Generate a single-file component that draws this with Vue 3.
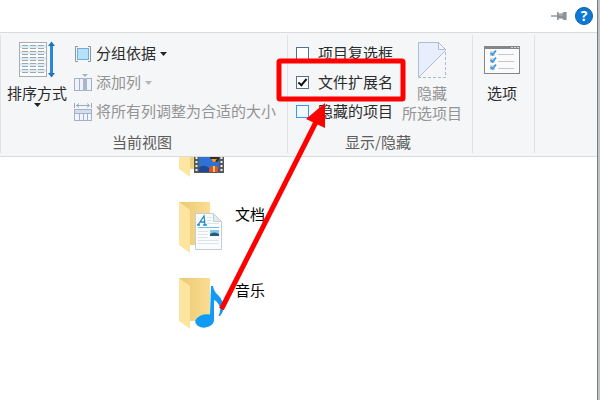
<script setup>
import { ref } from 'vue';

const itemCheckBoxes = ref(false);
const fileExtensions = ref(true);
const hiddenItems = ref(false);

const sheetRows = [4, 7, 10, 13, 16, 19, 22, 25, 28, 31];
</script>

<template>
  <div class="window">
    <header class="title-bar">
      <button class="icon-button" aria-label="固定功能区">
        <svg width="16" height="10" viewBox="0 0 16 10">
          <path d="M0 5h7" stroke="#8b9298" stroke-width="1.4" />
          <path d="M6 1h1.6v1.500h4V1.500l2-.5h2v8h-2l-2-.5v-1h-4V9H6z" fill="#8b9298" />
          <path d="M8 4h4" stroke="#b9bec3" />
        </svg>
      </button>
      <button class="help" aria-label="帮助">?</button>
    </header>

    <section class="ribbon">
      <div class="group">
        <div class="group-body view-body">
          <button class="large-button">
            <span class="large-icon">
              <svg width="38" height="38" viewBox="0 0 38 38">
                <rect x="1.500" y="1.500" width="27" height="34" fill="#fbfcfc" stroke="#a9adb0" />
                <path d="M2 4h26v3H2zM2 10h26v3H2zM2 16h26v3H2zM2 22h26v3H2zM2 28h26v3H2z" fill="#d8edf6" />
                <path
                  v-for="y in sheetRows"
                  :key="y"
                  :d="`M4 ${y + 0.5}h6M12 ${y + 0.5}h6M20 ${y + 0.5}h6`"
                  stroke="#a5a5a5"
                />
                <path d="M33.500 3v31" stroke="#2b86d3" stroke-width="3" />
                <path d="M30 5l3.500-4.500L37 5zM30 32l3.500 4.500L37 32z" fill="#1f74bf" />
              </svg>
            </span>
            <span>排序方式</span>
            <svg width="7" height="4" viewBox="0 0 7 4"><path d="M0 0h7L3.500 4z" fill="#222" /></svg>
          </button>
          <div class="commands">
            <button class="command">
              <svg width="18" height="18" viewBox="0 0 18 18">
                <path d="M4 1.500H1.500v15H4M14 1.500h2.500v15H14" fill="none" stroke="#8e9499" />
                <rect x="3.500" y="3.500" width="11" height="11" fill="#b9e0fb" stroke="#6aaee0" />
              </svg>
              <span>分组依据</span>
              <svg width="7" height="4" viewBox="0 0 7 4"><path d="M0 0h7L3.500 4z" fill="#222" /></svg>
            </button>
            <button class="command" disabled>
              <svg width="18" height="18" viewBox="0 0 18 18">
                <path d="M8 0h6l-3 3z" fill="#a3b2c9" />
                <rect x=".5" y="4.500" width="17" height="12" fill="#eef3fb" stroke="#a3b2c9" />
                <path d="M9 4h4v13H9z" fill="#a9b6cb" />
                <path d="M5.500 5v11" stroke="#a3b2c9" />
              </svg>
              <span>添加列</span>
              <svg width="7" height="4" viewBox="0 0 7 4"><path d="M0 0h7L3.500 4z" fill="#b4b6b8" /></svg>
            </button>
            <button class="command" disabled>
              <svg width="18" height="18" viewBox="0 0 18 18">
                <path d="M.5 0v5M17.500 0v5M2 2.500h14M5 .5l-2.500 2L5 4.500M13 .5l2.500 2-2.500 2" fill="none" stroke="#98a8c2" />
                <rect x=".5" y="6.500" width="17" height="11" fill="#f2f5fb" stroke="#a3b2c9" />
                <path d="M1 7h16v3H1z" fill="#d3dded" />
                <path d="M1 10.500h16M5.500 10v7M9.500 10v7M13.500 10v7" stroke="#a3b2c9" />
              </svg>
              <span>将所有列调整为合适的大小</span>
            </button>
          </div>
        </div>
        <div class="group-title">当前视图</div>
      </div>

      <div class="group">
        <div class="group-body show-body">
          <div class="checks">
            <label class="check"><input v-model="itemCheckBoxes" type="checkbox" /><span>项目复选框</span></label>
            <label class="check"><input v-model="fileExtensions" type="checkbox" /><span>文件扩展名</span></label>
            <label class="check hot"><input v-model="hiddenItems" type="checkbox" /><span>隐藏的项目</span></label>
          </div>
          <button class="large-button" disabled>
            <span class="large-icon">
              <svg width="30" height="38" viewBox="0 0 30 38">
                <path d="M1.500 36.500v-35h20l7 7v1z" fill="#e6effb" />
                <path d="M1.500 36.500v-35h20l7 7v1z" fill="none" stroke="#aebcd6" />
                <path d="M21.500 1.500v7h7z" fill="#f2f6fc" stroke="#aebcd6" />
                <path d="M28.500 11v25.500H2" fill="none" stroke="#a9b7d0" stroke-dasharray="3 2" />
              </svg>
            </span>
            <span>隐藏</span>
            <span>所选项目</span>
          </button>
        </div>
        <div class="group-title">显示/隐藏</div>
      </div>

      <div class="group">
        <div class="group-body option-body">
          <button class="large-button">
            <span class="large-icon">
              <svg width="36" height="28" viewBox="0 0 36 28">
                <rect x=".5" y=".5" width="35" height="27" fill="#fbfbfb" stroke="#83878a" />
                <path d="M0 0h36v3H0z" fill="#83878a" />
                <path d="M27 1.500h2M30 1.500h2M33 1.500h2" stroke="#d5d7d8" />
                <path d="M6 5h5v5H6zM6 12h5v5H6zM6 19h5v5H6z" fill="#d3d8db" />
                <path d="M6.500 7l2 2 3.500-4.500M6.500 14l2 2 3.500-4.500M6.500 21l2 2 3.500-4.500" fill="none" stroke="#3d9ae2" stroke-width="1.800" />
                <path d="M14 8.500h16M14 15.500h16M14 22.500h16" stroke="#c6c8ca" />
              </svg>
            </span>
            <span>选项</span>
          </button>
        </div>
      </div>
    </section>

    <main class="content">
      <ul class="files">
        <li>
          <svg width="48" height="54" viewBox="0 0 48 54">
            <path d="M1 1h31v43H12z" fill="#f1d27c" />
            <path d="M1 1l11 7v44L1 44z" fill="#fde6a0" />
            <path d="M16 10h30v38H16z" fill="#55595b" />
            <path d="M21 10h20v37H21z" fill="#2f72d6" />
            <path d="M21 42q6-3 10 1t10 0v4H21z" fill="#1d4a94" />
            <path d="M18.500 12v35M43.500 12v35" stroke="#eee" stroke-width="2" stroke-dasharray="2 2" />
            <path d="M32 29h9v6l-2 2h-4l-3-4z" fill="#302a34" />
            <path d="M33 34h6l-2 3h-2z" fill="#ef9b26" />
            <path d="M31 47q-1-6 5-6t4 6z" fill="#e4502b" />
            <path d="M35 41h2v6h-2z" fill="#f8d13c" />
          </svg>
        </li>
        <li>
          <svg width="48" height="54" viewBox="0 0 48 54">
            <defs>
              <linearGradient id="docBack" x2="1"><stop stop-color="#ebc974" /><stop offset="1" stop-color="#f9dd91" /></linearGradient>
            </defs>
            <path d="M1 1h31v43H12z" fill="url(#docBack)" />
            <path d="M1 1l11 8v43L1 44z" fill="#fde5a0" />
            <path d="M17.500 12.500h18l8 8v28h-26z" fill="#fafcfd" stroke="#c6cdd1" />
            <path d="M35.500 12.500v8h8z" fill="#e5eaee" stroke="#c6cdd1" />
            <path d="M29 16.500h5M29 19.500h5M29 22.500h12M20 30.500h10M20 33.500h10M20 36.500h10M20 39.500h21M20 42.500h21" stroke="#dbe4e9" />
            <path d="M20 26.500h21" stroke="#78bce5" />
            <path d="M20 24l6-9 1 9M22 21h5M19 24h3M25 24h4" fill="none" stroke="#2489cb" stroke-width="1.300" />
            <path d="M32 29h9v6h-9z" fill="#83c8ef" />
            <path d="M32 33q4-3 9 0v2h-9z" fill="#275d78" />
          </svg>
          <span>文档</span>
        </li>
        <li>
          <svg width="48" height="54" viewBox="0 0 48 54">
            <path d="M1 1h31v43H12z" fill="url(#docBack)" />
            <path d="M1 1l11 8v43L1 44z" fill="#fde5a0" />
            <path
              d="M33 9h2q1 6 5 9 5 5 5.500 12 0 5-3.500 9h-1.500q3-6 .5-11-2-4-5-5v20q0 4-5 6.500-6 2.500-11-.5-5-4-1-8 5-5 13-3.500z"
              fill="#119bf5"
            />
          </svg>
          <span>音乐</span>
        </li>
      </ul>
    </main>

    <svg class="annotation" width="420" height="320" viewBox="0 0 420 320">
      <rect x="279" y="61" width="124" height="38" rx="1" fill="none" stroke="#f00" stroke-width="5" />
      <path d="M221.500 309L316 122" stroke="#f00" stroke-width="5" />
      <path d="M325 103l-19 16 19 9z" fill="#f00" />
    </svg>
  </div>
</template>

<style>
body {
  margin: 0;
  background: #c0c4c5;
}
</style>

<style scoped>
.window {
  position: relative;
  display: flex;
  flex-direction: column;
  box-sizing: border-box;
  min-height: 100vh;
  margin-right: 2px;
  border-right: 1px solid #777c7e;
  background: #fff;
  color: #2b2b2b;
  font-family: "Noto Sans CJK SC", sans-serif;
  font-size: 15px;
  line-height: 20px;
}

button {
  padding: 0;
  border: 0;
  background: none;
  color: inherit;
  font: inherit;
}

button:disabled {
  color: #939393;
}

svg {
  display: block;
  flex: none;
}

.title-bar {
  display: flex;
  align-items: center;
  justify-content: flex-end;
  gap: 8px;
  height: 32px;
  padding-right: 4px;
}

.help {
  width: 18px;
  height: 18px;
  border: 1px solid #0b5fae;
  border-radius: 50%;
  background: #0e78d7;
  color: #fff;
  font-family: "Open Sans", sans-serif;
  font-size: 14px;
  font-weight: 700;
  line-height: 16px;
}

.ribbon {
  display: flex;
  padding: 2px 0 3px;
  border-top: 1px solid #d9dbde;
  border-bottom: 1px solid #d9dbde;
  background: #f5f6f8;
}

.group {
  display: flex;
  flex-direction: column;
  border-right: 1px solid #e0e2e4;
}

.group:first-child {
  border-left: 1px solid #e0e2e4;
}

.group-body {
  display: flex;
  height: 87px;
  padding-top: 4px;
}

.view-body {
  gap: 7px;
  padding-left: 6px;
  padding-right: 11px;
}

.show-body {
  gap: 9px;
  padding-left: 8px;
  padding-right: 10px;
}

.option-body {
  padding-left: 11px;
  padding-right: 14px;
}

.group-title {
  margin: 6px 4px 1px 0;
  color: #5c5c5c;
  text-align: center;
}

.large-button {
  display: flex;
  flex-direction: column;
  align-items: center;
}

.large-icon {
  display: flex;
  align-items: center;
  height: 42px;
  margin-bottom: 2px;
}

.command {
  display: flex;
  align-items: center;
  gap: 4px;
  height: 29px;
}

.check {
  display: flex;
  align-items: center;
  gap: 9px;
  height: 29px;
}

.command span,
.check span {
  padding-bottom: 2px;
}

.check input {
  display: grid;
  place-items: center;
  box-sizing: border-box;
  width: 13px;
  height: 13px;
  margin: 0;
  border: 1px solid #56708f;
  background: #fff;
  appearance: none;
}

.check.hot input {
  border-color: #3399ff;
  background: #f3f9ff;
}

.check input:checked::after {
  content: "";
  width: 3px;
  height: 7px;
  margin-bottom: 2px;
  border: solid #111;
  border-width: 0 2px 2px 0;
  transform: rotate(40deg);
}

.content {
  flex: 1;
  overflow: hidden;
}

.files {
  margin: -32px 0 0;
  padding: 0 0 0 178px;
  list-style: none;
}

.files li {
  display: flex;
  gap: 9px;
  height: 76px;
  color: #000;
  line-height: 26px;
}

.annotation {
  position: absolute;
  top: 0;
  left: 0;
  pointer-events: none;
}
</style>
